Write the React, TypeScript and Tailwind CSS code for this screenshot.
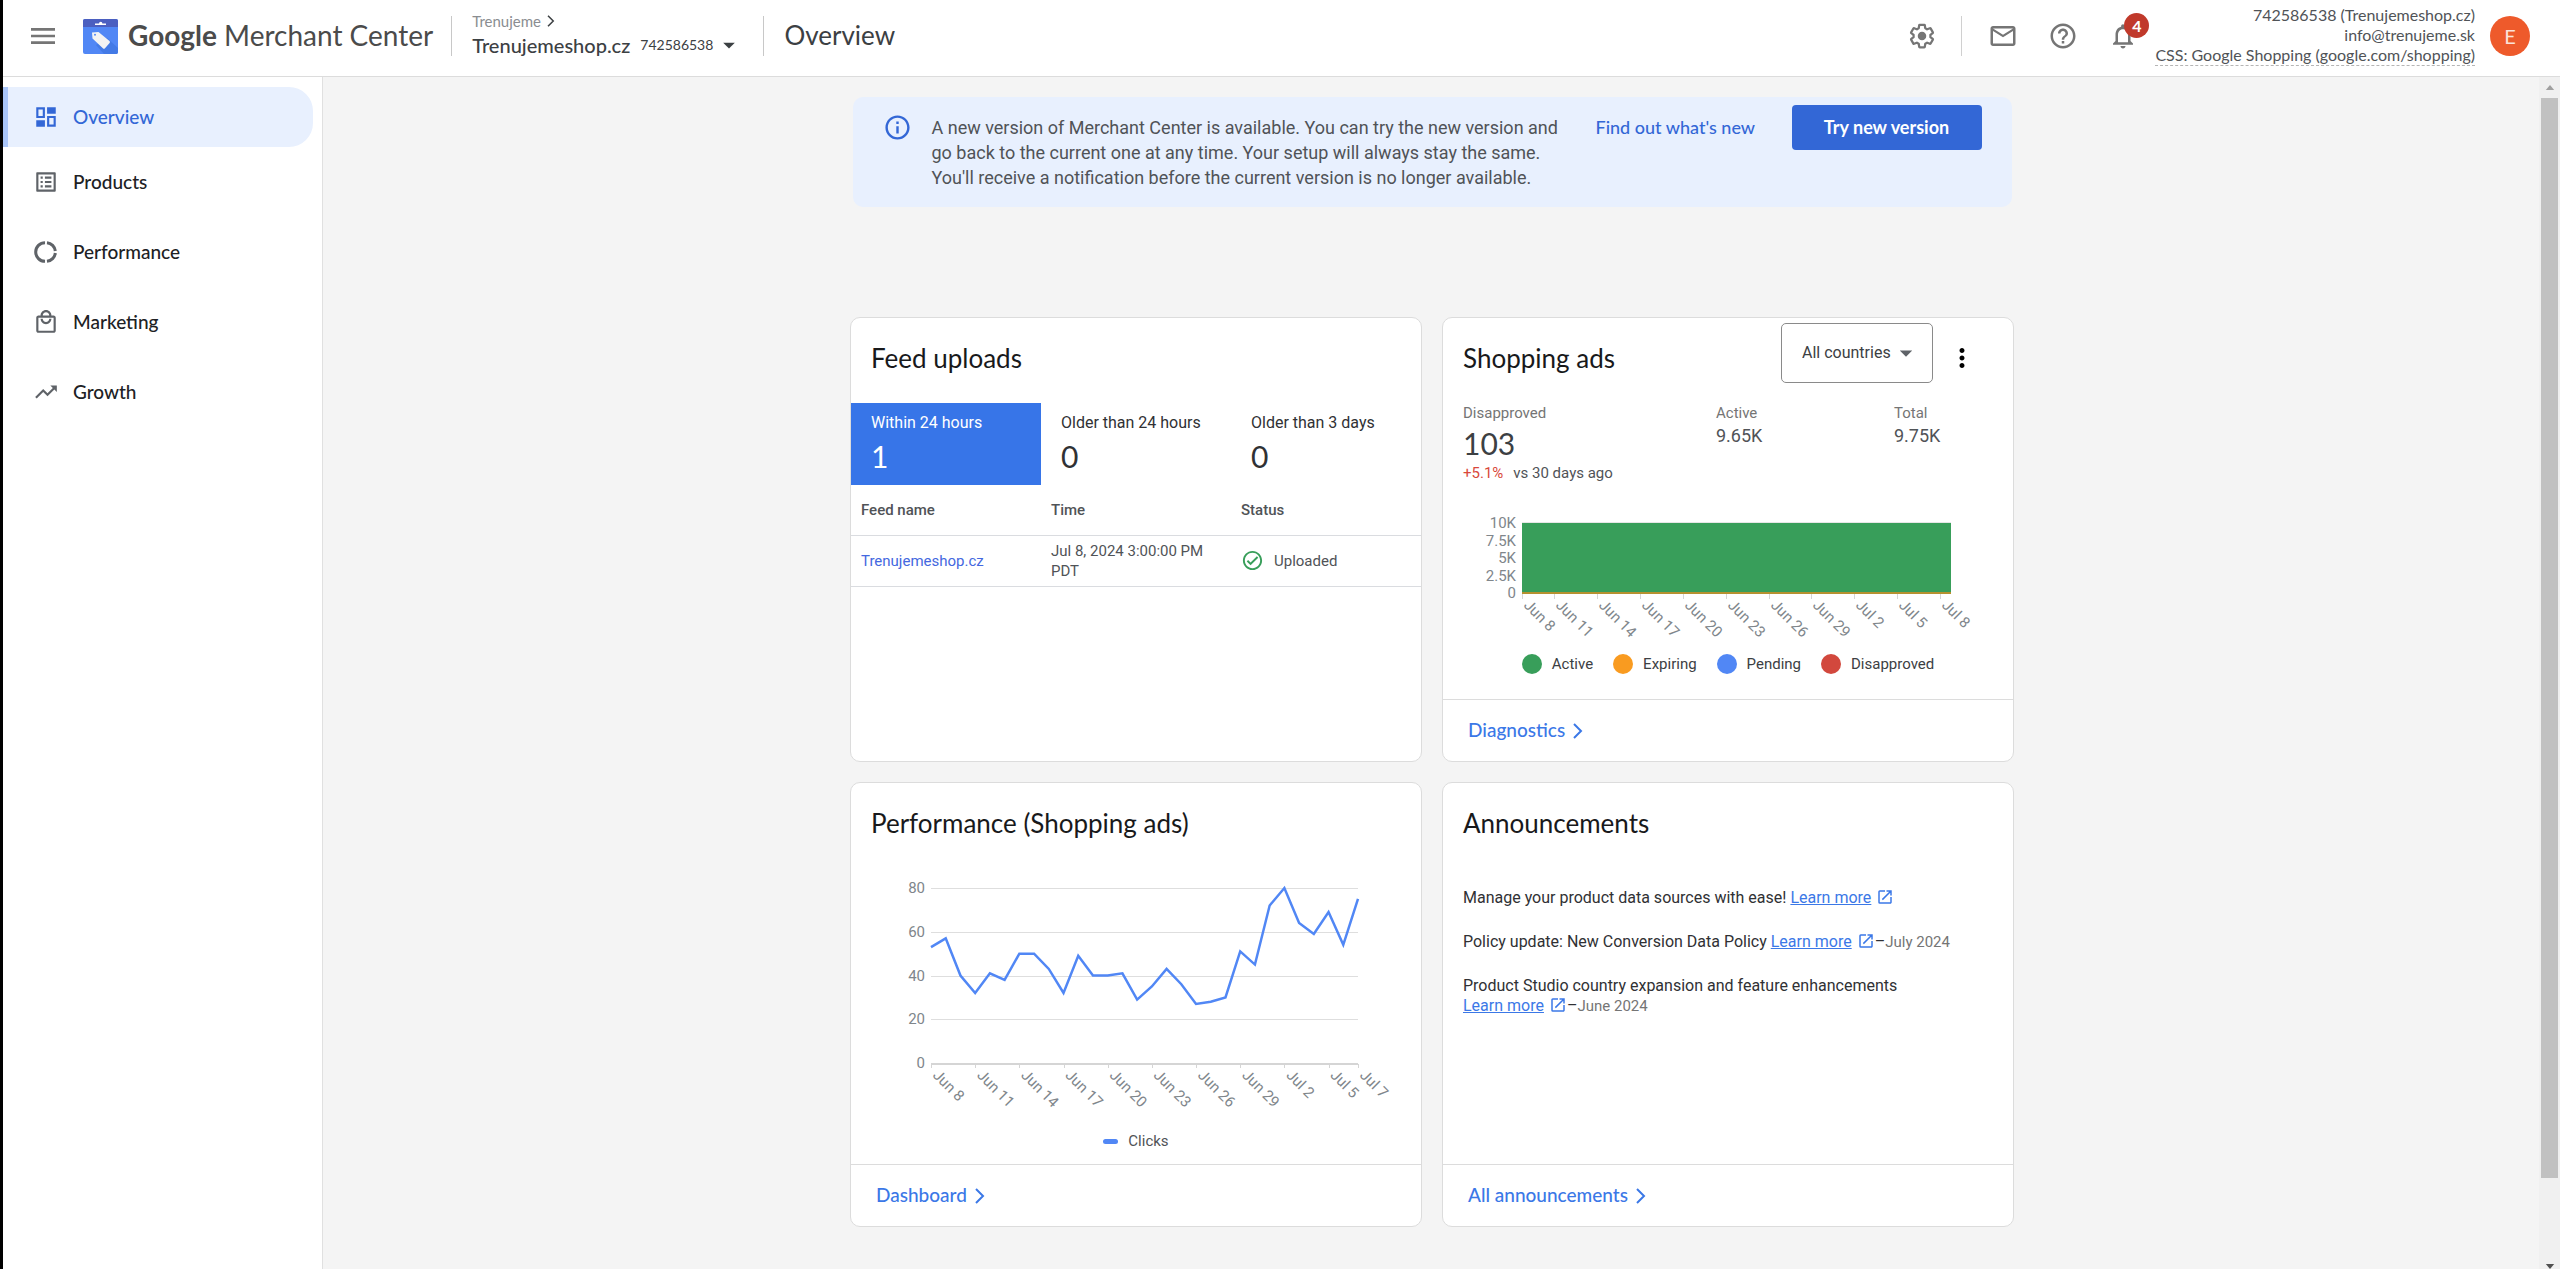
import { useState } from 'react'
import type { ReactNode } from 'react'
import type { IconType } from 'react-icons'
import {
  MdArrowDropDown,
  MdHelpOutline,
  MdInfoOutline,
  MdMailOutline,
  MdMenu,
  MdMoreVert,
  MdNotificationsNone,
  MdOpenInNew,
  MdOutlineCheckCircle,
  MdOutlineListAlt,
  MdOutlineLocalMall,
  MdTrendingUp,
} from 'react-icons/md'

// ── icons ────────────────────────────────────────────────────────

function LogoIcon() {
  return (
    <svg viewBox="0 0 35 35" className="size-[35px] shrink-0">
      <rect width="35" height="35" rx="2" fill="#5187f5" />
      <path d="M13 26 24 19 35 29v4a2 2 0 0 1-2 2H21z" fill="#437ae6" />
      <path d="M2 0h31a2 2 0 0 1 2 2v6H0V2a2 2 0 0 1 2-2z" fill="#4b5fc0" />
      <path d="M12 6V4.500h4a1.700 1.700 0 0 1 3.400 0H23V6z" fill="#fff" />
      <path d="M9 13.500 15.500 13 26.500 22a1.500 1.500 0 0 1 .1 2L22 29.300a1.500 1.500 0 0 1-2.100 0L9.500 19.500z" fill="#f3f3f3" />
      <circle cx="12" cy="15.800" r="1" fill="#5187f5" />
    </svg>
  )
}

function DashboardIcon() {
  return (
    <svg viewBox="0 0 24 24" className="size-[26px]" fill="currentColor">
      <path d="M3 3h8v10H3zm2 2v6h4V5zM3 15h8v6H3zM13 3h8v6h-8zM13 11h8v10h-8zm2 2v6h4v-6z" fillRule="evenodd" />
    </svg>
  )
}

function DonutIcon() {
  return (
    <svg viewBox="0 0 24 24" className="size-[26px]" fill="none" stroke="currentColor" strokeWidth="2.800">
      <path d="M12.900 3.400a8.600 8.600 0 0 1 7.700 7.700M20.600 12.900a8.600 8.600 0 0 1-7.700 7.700M11.100 20.600a8.600 8.600 0 0 1 0-17.200" />
    </svg>
  )
}

function GearIcon() {
  return (
    <svg viewBox="0 0 24 24" className="size-[30px]">
      <path
        fill="none"
        stroke="currentColor"
        strokeWidth="2"
        strokeLinejoin="round"
        transform="translate(1.200 1.200) scale(.9)"
        d="M19.430 12.980c.04-.32.07-.64.07-.98 0-.34-.03-.66-.07-.98l2.110-1.650c.19-.15.24-.42.12-.64l-2-3.460c-.09-.16-.26-.25-.44-.25-.06 0-.12.010-.17.030l-2.490 1c-.52-.4-1.080-.73-1.690-.98l-.38-2.650C14.460 2.180 14.250 2 14 2h-4c-.25 0-.46.18-.49.42l-.38 2.650c-.61.25-1.170.59-1.690.98l-2.490-1c-.06-.02-.12-.03-.18-.03-.17 0-.34.09-.43.25l-2 3.460c-.13.22-.07.49.12.64l2.110 1.650c-.04.32-.07.65-.07.98 0 .33.030.66.070.98l-2.110 1.650c-.19.15-.24.42-.12.64l2 3.460c.09.16.26.25.44.25.06 0 .12-.01.17-.03l2.490-1c.52.4 1.080.73 1.690.98l.38 2.650c.03.24.24.42.49.42h4c.25 0 .46-.18.49-.42l.38-2.650c.61-.25 1.170-.59 1.690-.98l2.490 1c.06.020.12.030.18.030.17 0 .34-.09.43-.25l2-3.460c.12-.22.07-.49-.12-.64l-2.110-1.650z"
      />
      <circle cx="12" cy="12" r="3.400" fill="currentColor" />
    </svg>
  )
}

function ChevronIcon({ className = '' }: { className?: string }) {
  return (
    <svg viewBox="0 0 10 16" className={className} fill="none" stroke="currentColor" strokeWidth="2">
      <path d="M1 1l7 7-7 7" />
    </svg>
  )
}

// ── header ───────────────────────────────────────────────────────

function Header() {
  return (
    <header className="flex h-[77px] shrink-0 items-center border-b border-[#dcdcdc] bg-white pr-[30px] pb-1 pl-6 font-['Lato',sans-serif] text-[#3c4043]">
      <button aria-label="Main menu" className="text-[#757575]">
        <MdMenu size={32} />
      </button>
      <a href="#" className="ml-6 flex items-center gap-2.5 text-[#4b4b4b]">
        <LogoIcon />
        <span className="pb-0.5 text-[28px] leading-8 whitespace-nowrap">
          <span className="font-bold">Google</span> Merchant Center
        </span>
      </a>
      <div className="ml-[18px] h-10 w-px bg-[#c8c8c8]" />
      <div className="ml-5 pb-0.5">
        <a href="#" className="flex items-center gap-1.5 text-[15px] leading-5 text-[#8a8d91]">
          Trenujeme
          <ChevronIcon className="h-3 w-2 text-[#3c4043]" />
        </a>
        <button className="flex items-center text-[20px] leading-6 font-medium whitespace-nowrap">
          Trenujemeshop.cz
          <span className="ml-2.5 text-[14px] font-normal">742586538</span>
          <MdArrowDropDown size={28} className="ml-0.5" />
        </button>
      </div>
      <div className="ml-5 h-10 w-px bg-[#c8c8c8]" />
      <h1 className="ml-5 pb-0.5 text-[26px] leading-8">Overview</h1>

      <div className="ml-auto flex items-center text-[#757575]">
        <button aria-label="Settings"><GearIcon /></button>
        <div className="ml-6 h-10 w-px bg-[#d0d0d0]" />
        <button aria-label="Mail" className="ml-[26px]"><MdMailOutline size={30} /></button>
        <button aria-label="Help" className="ml-[30px]"><MdHelpOutline size={30} /></button>
        <button aria-label="Notifications" className="relative ml-[30px]">
          <MdNotificationsNone size={30} />
          <span className="absolute -top-2 left-4 flex size-[25px] items-center justify-center rounded-full bg-[#c0392b] text-[16px] font-bold text-white">4</span>
        </button>
      </div>
      <div className="ml-[17px] flex flex-col items-end pb-0.5 text-[16px] leading-5 whitespace-nowrap text-[#505357]">
        <span>742586538 (Trenujemeshop.cz)</span>
        <span>info@trenujeme.sk</span>
        <span className="border-b border-dashed border-[#b5b5b5]">CSS: Google Shopping (google.com/shopping)</span>
      </div>
      <button aria-label="Account" className="ml-[15px] size-10 rounded-full bg-[#ee5a2b] text-[20px] text-[#fbe3da]">E</button>
    </header>
  )
}

// ── sidebar ──────────────────────────────────────────────────────

const NAV_ITEMS: { label: string; icon: IconType | (() => ReactNode) }[] = [
  { label: 'Products',    icon: MdOutlineListAlt },
  { label: 'Performance', icon: DonutIcon },
  { label: 'Marketing',   icon: MdOutlineLocalMall },
  { label: 'Growth',      icon: MdTrendingUp },
]

function Sidebar() {
  return (
    <nav className="w-80 shrink-0 border-r border-[#e0e0e0] bg-white pt-2.5 pr-[9px] font-['Lato',sans-serif] text-[19px] font-medium">
      <a href="#" className="flex h-[60px] items-center gap-3.5 rounded-r-3xl border-l-[5px] border-[#a9c5f8] bg-[#e8f0fe] pl-[25px] text-[#3367d6]">
        <DashboardIcon />
        Overview
      </a>
      {NAV_ITEMS.map(({ label, icon: Icon }) => (
        <a key={label} href="#" className="flex h-[70px] items-center gap-3.5 pl-[30px] text-[#202124]">
          <span className="text-[#5f6368]"><Icon size={26} /></span>
          {label}
        </a>
      ))}
    </nav>
  )
}

// ── card parts ───────────────────────────────────────────────────

function Card({ title, actions, footer, children }: { title: string; actions?: ReactNode; footer?: string; children: ReactNode }) {
  return (
    <section className="flex min-h-[445px] flex-col overflow-hidden rounded-[10px] border border-[#dcdcdc] bg-white">
      <div className="flex h-20 items-center justify-between px-5">
        <h2 className="font-['Lato',sans-serif] text-[26px] leading-8 text-[#18191b]">{title}</h2>
        {actions}
      </div>
      {children}
      {footer && (
        <div className="mt-auto flex h-[62px] items-center border-t border-[#dcdcdc] px-[25px]">
          <a href="#" className="flex items-center gap-2 font-['Lato',sans-serif] text-[19px] font-medium text-[#3b78e7]">
            {footer}
            <ChevronIcon className="h-4 w-2.5" />
          </a>
        </div>
      )}
    </section>
  )
}

// ── feed uploads ─────────────────────────────────────────────────

const FEED_TABS = [
  { label: 'Within 24 hours',     count: 1 },
  { label: 'Older than 24 hours', count: 0 },
  { label: 'Older than 3 days',   count: 0 },
]

function FeedUploads() {
  const [tab, setTab] = useState(0)
  return (
    <Card title="Feed uploads">
      <div className="mt-[5px] grid grid-cols-3">
        {FEED_TABS.map(({ label, count }, i) => (
          <button
            key={label}
            onClick={() => setTab(i)}
            className={`px-5 pt-2.5 pb-1.5 text-left ${tab === i ? 'bg-[#3775e8] text-white' : 'text-[#303134]'}`}
          >
            <span className="block text-[16px] leading-5">{label}</span>
            <span className="block font-['Lato',sans-serif] text-[30px] leading-[46px]">{count}</span>
          </button>
        ))}
      </div>
      <table className="w-full table-fixed text-left text-[15px] leading-5 text-[#505357]">
        <thead>
          <tr className="h-[50px] border-b border-[#dadce0]">
            <th className="px-2.5 font-medium">Feed name</th>
            <th className="px-2.5 font-medium">Time</th>
            <th className="px-2.5 font-medium">Status</th>
          </tr>
        </thead>
        <tbody>
          <tr className="h-[51px] border-b border-[#dadce0]">
            <td className="px-2.5"><a href="#" className="text-[#4468e0]">Trenujemeshop.cz</a></td>
            <td className="px-2.5">Jul 8, 2024 3:00:00 PM PDT</td>
            <td className="px-2.5">
              <span className="flex items-center gap-2.5">
                <MdOutlineCheckCircle size={23} className="text-[#389e5a]" />
                Uploaded
              </span>
            </td>
          </tr>
        </tbody>
      </table>
    </Card>
  )
}

// ── shopping ads ─────────────────────────────────────────────────

const ADS_TICKS = [
  { x: 79,  label: 'Jun 8' },
  { x: 111, label: 'Jun 11' },
  { x: 154, label: 'Jun 14' },
  { x: 197, label: 'Jun 17' },
  { x: 240, label: 'Jun 20' },
  { x: 283, label: 'Jun 23' },
  { x: 326, label: 'Jun 26' },
  { x: 368, label: 'Jun 29' },
  { x: 411, label: 'Jul 2' },
  { x: 454, label: 'Jul 5' },
  { x: 497, label: 'Jul 8' },
]

const ADS_LEVELS = ['10K', '7.5K', '5K', '2.5K', '0']

const ADS_LEGEND = [
  { label: 'Active',      dot: 'bg-[#389e5a]' },
  { label: 'Expiring',    dot: 'bg-[#f99b20]' },
  { label: 'Pending',     dot: 'bg-[#5187f5]' },
  { label: 'Disapproved', dot: 'bg-[#d2483d]' },
]

function AdsChart() {
  return (
    <svg viewBox="0 0 570 157" className="w-full text-[15px]" fill="#80868b">
      {ADS_LEVELS.map((label, i) => (
        <text key={label} x={73} y={45 + i * 17.5} textAnchor="end">{label}</text>
      ))}
      <rect x={79} y={39} width={429} height={1} fill="#e6e6e6" />
      <rect x={79} y={40} width={429} height={70} fill="#389e5a" />
      <rect x={79} y={109} width={429} height={2} fill="#b5912f" />
      {ADS_TICKS.map(({ x, label }) => (
        <g key={label}>
          <rect x={x} y={111} width={1} height={5} fill="#d5d5d5" />
          <text transform={`translate(${x + 1} 123) rotate(45)`}>{label}</text>
        </g>
      ))}
    </svg>
  )
}

function ShoppingAds() {
  const actions = (
    <div className="flex items-center self-start pt-[5px]">
      <label className="relative flex items-center text-[#5f6368]">
        <select aria-label="Country" className="h-[60px] w-[152px] appearance-none rounded-[5px] border border-[#8a8a8a] bg-white pl-5 text-[16px] text-[#3c4043]">
          <option>All countries</option>
        </select>
        <MdArrowDropDown size={30} className="pointer-events-none absolute right-3" />
      </label>
      <button aria-label="More options" className="mt-2.5 mr-4 ml-[14px] text-black">
        <MdMoreVert size={30} />
      </button>
    </div>
  )

  return (
    <Card title="Shopping ads" actions={actions} footer="Diagnostics">
      <dl className="mt-[5px] grid grid-cols-[253px_178px_auto] px-5 text-[18px] leading-[26px] text-[#505357]">
        <div>
          <dt className="text-[15px] leading-5 text-[#757575]">Disapproved</dt>
          <dd className="font-['Lato',sans-serif] text-[30px] leading-10 text-[#3c4043]">103</dd>
          <dd className="text-[15px] leading-5"><span className="mr-2.5 text-[#d9483b]">+5.1%</span>vs 30 days ago</dd>
        </div>
        <div>
          <dt className="text-[15px] leading-5 text-[#757575]">Active</dt>
          <dd>9.65K</dd>
        </div>
        <div>
          <dt className="text-[15px] leading-5 text-[#757575]">Total</dt>
          <dd>9.75K</dd>
        </div>
      </dl>
      <AdsChart />
      <ul className="mt-[14px] flex justify-center gap-5 text-[15px] leading-5 text-[#3c4043]">
        {ADS_LEGEND.map(({ label, dot }) => (
          <li key={label} className="flex items-center gap-2.5">
            <span className={`size-5 rounded-full ${dot}`} />
            {label}
          </li>
        ))}
      </ul>
    </Card>
  )
}

// ── performance ──────────────────────────────────────────────────

const CLICKS = [
  53, 57, 40, 32, 41, 38, 50, 50, 43, 32,
  49, 40, 40, 41, 29, 35, 43, 36, 27, 28,
  30, 51, 45, 72, 80, 64, 59, 69, 54, 75,
]

const CLICK_TICKS: [number, string][] = [
  [0, 'Jun 8'], [3, 'Jun 11'], [6, 'Jun 14'], [9, 'Jun 17'], [12, 'Jun 20'], [15, 'Jun 23'],
  [18, 'Jun 26'], [21, 'Jun 29'], [24, 'Jul 2'], [27, 'Jul 5'], [29, 'Jul 7'],
]

function clickX(day: number) {
  return 80 + (day * 427) / (CLICKS.length - 1)
}

function clickY(clicks: number) {
  return 200 - (clicks * 175) / 80
}

function ClicksChart() {
  return (
    <svg viewBox="0 0 570 263" className="w-full text-[15px]" fill="#80868b">
      {[80, 60, 40, 20, 0].map((v) => (
        <g key={v}>
          <rect x={80} y={Math.round(clickY(v))} width={427} height={v === 0 ? 2 : 1} fill={v === 0 ? '#d5d5d5' : '#dedede'} />
          <text x={74} y={clickY(v) + 5} textAnchor="end">{v}</text>
        </g>
      ))}
      {CLICK_TICKS.map(([day, label]) => (
        <g key={label}>
          <rect x={Math.round(clickX(day))} y={201} width={1} height={4} fill="#d5d5d5" />
          <text transform={`translate(${clickX(day) + 1} 213) rotate(45)`}>{label}</text>
        </g>
      ))}
      <polyline
        points={CLICKS.map((v, day) => `${clickX(day)},${clickY(v)}`).join(' ')}
        fill="none"
        stroke="#5187f5"
        strokeWidth={2.5}
      />
    </svg>
  )
}

function Performance() {
  return (
    <Card title="Performance (Shopping ads)" footer="Dashboard">
      <ClicksChart />
      <div className="mt-[5px] flex items-center justify-center gap-2.5 text-[15px] leading-5 text-[#505357]">
        <span className="h-[5px] w-[15px] rounded-full bg-[#5187f5]" />
        Clicks
      </div>
    </Card>
  )
}

// ── announcements ────────────────────────────────────────────────

const ANNOUNCEMENTS = [
  { text: 'Manage your product data sources with ease!', date: '' },
  { text: 'Policy update: New Conversion Data Policy', date: 'July 2024' },
  { text: 'Product Studio country expansion and feature enhancements', date: 'June 2024' },
]

function Announcements() {
  return (
    <Card title="Announcements" footer="All announcements">
      <ul className="mt-[25px] space-y-6 pr-11 pl-5 text-[16px] leading-5 text-[#303134]">
        {ANNOUNCEMENTS.map(({ text, date }) => (
          <li key={text}>
            {text}{' '}
            <span className="whitespace-nowrap">
              <a href="#" className="text-[#3b78e7]">
                <span className="underline">Learn more</span>
                <MdOpenInNew size={18} className="ml-[5px] inline align-[-3px]" />
              </a>
              {date && <>–<span className="text-[15px] text-[#757575]">{date}</span></>}
            </span>
          </li>
        ))}
      </ul>
    </Card>
  )
}

// ── page ─────────────────────────────────────────────────────────

function Banner() {
  return (
    <div className="mx-auto flex min-h-[110px] max-w-[1159px] items-start rounded-[10px] bg-[#e8f0fe] px-[30px]">
      <MdInfoOutline size={29} className="mt-4 shrink-0 text-[#3367d6]" />
      <p className="mt-[18px] ml-5 w-[640px] text-[18px] leading-[25px] text-[#505357]">
        A new version of Merchant Center is available. You can try the new version and go back to the current one at any
        time. Your setup will always stay the same. You'll receive a notification before the current version is no longer
        available.
      </p>
      <a href="#" className="mt-[18px] ml-6 font-['Lato',sans-serif] text-[18px] leading-[25px] font-medium text-[#3367d6]">Find out what's new</a>
      <button className="mt-2 ml-auto h-[45px] w-[190px] rounded-[4px] bg-[#3367d6] font-['Lato',sans-serif] text-[18px] font-bold text-white">
        Try new version
      </button>
    </div>
  )
}

function ScrollTrack() {
  return (
    <div className="flex w-[21px] shrink-0 flex-col items-center bg-[#f0f0f0]">
      <svg viewBox="0 0 10 6" className="my-[8px] h-[5px] w-2.5" fill="#a0a0a0"><path d="M0 6l5-6 5 6z" /></svg>
      <div className="w-[17px] grow bg-[#c1c1c1]" />
      <svg viewBox="0 0 10 6" className="mt-[86px] h-[5px] w-2.5" fill="#505050"><path d="M0 0l5 6 5-6z" /></svg>
    </div>
  )
}

export default function App() {
  return (
    <div className="flex h-screen flex-col overflow-hidden border-l-[3px] border-black bg-[#f4f4f4] font-['Roboto',sans-serif]">
      <Header />
      <div className="flex min-h-0 grow">
        <Sidebar />
        <main className="grow overflow-hidden pt-5 pr-6 pl-[26px]">
          <Banner />
          <div className="mx-auto mt-[110px] grid max-w-[1164px] grid-cols-2 gap-5">
            <FeedUploads />
            <ShoppingAds />
            <Performance />
            <Announcements />
          </div>
        </main>
        <ScrollTrack />
      </div>
    </div>
  )
}
